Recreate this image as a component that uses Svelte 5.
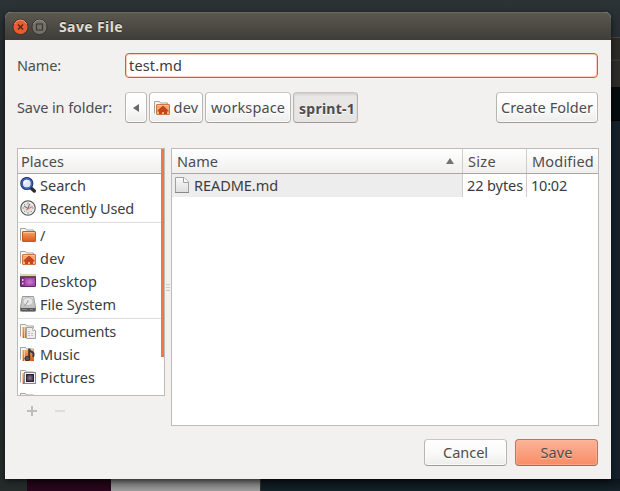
<script>
  function fit(node, width) {
    const extra = width - node.getBoundingClientRect().width;
    node.style.letterSpacing = `${extra / node.textContent.length}px`;
  }

  const groups = [
    [
      { icon: 'search', label: 'Search', w: 46 },
      { icon: 'recent', label: 'Recently Used', w: 94 },
    ],
    [
      { icon: 'folder', label: '/', w: 7 },
      { icon: 'home', label: 'dev', w: 25 },
      { icon: 'desktop', label: 'Desktop', w: 57 },
      { icon: 'disk', label: 'File System', w: 76 },
    ],
    [
      { icon: 'documents', label: 'Documents', w: 76 },
      { icon: 'music', label: 'Music', w: 40 },
      { icon: 'pictures', label: 'Pictures', w: 55 },
      { icon: 'folder', label: 'Videos', w: 46 },
    ],
  ];
</script>

{#snippet txt(label, w)}<span class="txt" use:fit={w}>{label}</span>{/snippet}

{#snippet icon(name)}
  <svg class="icon" width="16" height="16" viewBox="0 0 16 16">
    {#if name === 'search'}
      <path d="M11 11l3.300 3" stroke="#2a2c33" stroke-width="3.400" stroke-linecap="round" />
      <circle cx="6.800" cy="6.500" r="5.300" fill="#dce8f5" stroke="#223a80" stroke-width="2.600" />
      <circle cx="6.800" cy="6.500" r="5" fill="none" stroke="#4f71c0" stroke-width="1" />
      <path d="M4.500 6.500Q5 4 7.500 4" fill="none" stroke="#fff" stroke-width="1.300" />
    {:else if name === 'recent'}
      <circle cx="8" cy="8" r="7.200" fill="#dededc" stroke="#5a5a5a" stroke-width="1.200" />
      <circle cx="8" cy="8" r="5.900" fill="none" stroke="#f6f6f6" />
      <path d="M8 2v2M8 12v2M2 8h2M12 8h2M4 4l1 1M11 11l1 1M4 12l1-1" stroke="#999" />
      <path d="M4 6l4 2.500M8 8.500l1.500-4.500" fill="none" stroke="#666" />
      <path d="M6 10l6.500-3.500" stroke="#e0675c" />
    {:else if name === 'desktop'}
      <rect x=".5" y="1.500" width="15" height="12" rx=".5" fill="#7a2c80" stroke="#5a2b60" />
      <rect x="4.500" y="5" width="10.500" height="8" fill="url(#violet)" />
      <rect x="0" y="1" width="16" height="2" fill="#d9d4bc" />
      <path d="M0 3.500h16" stroke="#5b564a" />
      <path d="M2 6h1.500v2h-1.500zM2 9.500h1.500v2h-1.500z" fill="#e4c8e6" />
    {:else if name === 'disk'}
      <path d="M2.500 .5h11l2 10.500v3.500q0 1-1 1h-13q-1 0-1-1v-3.500z" fill="url(#metal)" stroke="#999" />
      <ellipse cx="8" cy="5.500" rx="5" ry="4" fill="#e7e7e7" stroke="#bbb" />
      <path d="M8 5.500l-3.500 4.500" stroke="#999" />
      <circle cx="8" cy="5.300" r="1.100" fill="#b4b4b4" />
      <path d="M.5 12h15v3h-15z" fill="#5a5a5a" />
      <path d="M2 13.500h5M10 13.500h3" stroke="#888" />
    {:else if name === 'file'}
      <path d="M1.500 .5h8.500l4.500 4.500v10.500h-13z" fill="url(#paper)" stroke="#a1a19e" />
      <path d="M9.500 .5v5h5" fill="#fff" stroke="#a1a19e" />
      <path d="M1 15.500h14" stroke="#888" />
    {:else}
      <path d="M.5 13.500v-12h5l1 1.500h7v3" fill="#f7f7f5" stroke="#a5a39f" />
      {#if name === 'folder' || name === 'home'}
        <rect x="2.500" y="4.500" width="13" height="10" rx=".5" fill={name === 'folder' ? 'url(#orange)' : 'url(#peach)'} stroke={name === 'folder' ? '#c45a26' : '#cf7445'} />
        <path d="M3.500 5.500h11" stroke="#fbc795" />
      {:else}
        <path d="M2 4h12v11h-12z" fill="url(#orange)" />
        <path d="M2.500 4v11M4.500 4v11" stroke="#f8c29b" />
      {/if}
      {#if name === 'home'}
        <path d="M9 5.500l5.500 5v1h-1.500v2.500h-3v-2h-2v2h-3v-2.500h-1.500v-1z" fill="#c8431c" />
      {:else if name === 'documents'}
        <path d="M6.500 4.500h6l3 3v8h-9z" fill="#eee" stroke="#a5a3a0" />
        <path d="M12.500 4.500v3h3" fill="#fff" stroke="#b4b4b4" />
        <path d="M8 8.500h3M8 10.500h6M8 12.500h5" stroke="#c0c0c0" stroke-dasharray="2 1" />
      {:else if name === 'music'}
        <path d="M9.200 12V2.500q.3 2.800 2.800 3.500 2.500 1.200 1 5" fill="none" stroke="#3a3a38" stroke-width="2" />
        <ellipse cx="7.400" cy="12.500" rx="2.500" ry="2.100" fill="#555551" stroke="#2c2c2a" />
      {:else if name === 'pictures'}
        <rect x="4.500" y="3.500" width="11" height="11" fill="#f3f3f3" stroke="#8a8a8a" />
        <rect x="6.500" y="5.500" width="7" height="7" fill="url(#photo)" stroke="#28222d" />
      {/if}
    {/if}
  </svg>
{/snippet}

<svg class="defs" width="0" height="0">
  <defs>
    <linearGradient id="orange" x1="0" y1="0" x2="0" y2="1"><stop stop-color="#f5a85f" /><stop offset="1" stop-color="#dc5521" /></linearGradient>
    <linearGradient id="peach" x1="0" y1="0" x2="0" y2="1"><stop stop-color="#f3a068" /><stop offset="1" stop-color="#f7b98a" /></linearGradient>
    <linearGradient id="metal" x1="0" y1="0" x2="0" y2="1"><stop stop-color="#ddd" /><stop offset="1" stop-color="#b4b4b4" /></linearGradient>
    <linearGradient id="paper" x1="0" y1="0" x2="0" y2="1"><stop stop-color="#fafafa" /><stop offset="1" stop-color="#ddd" /></linearGradient>
    <radialGradient id="violet"><stop stop-color="#d47bd5" /><stop offset="1" stop-color="#a548ab" /></radialGradient>
    <radialGradient id="photo"><stop stop-color="#8f7a9e" /><stop offset="1" stop-color="#433348" /></radialGradient>
  </defs>
</svg>

<div class="desk">
  <div class="behind right"></div>
  <div class="behind bottom"><i class="plum"></i><i class="grey"></i><i class="navy"></i></div>
  <section class="dialog">
    <header class="title">
      <svg width="40" height="18" viewBox="0 0 40 18">
        <circle cx="9.500" cy="9" r="7.600" fill="#e95b31" stroke="#35332f" />
        <path d="M3.500 6a6.500 6.500 0 0 1 12 0" fill="none" stroke="#f8936e" />
        <path d="M7 6.500l5 5M12 6.500l-5 5" stroke="#4b2b20" stroke-width="1.400" />
        <circle cx="28.500" cy="9" r="7.600" fill="#747169" stroke="#35332f" />
        <path d="M22.500 6a6.500 6.500 0 0 1 12 0" fill="none" stroke="#918e85" />
        <rect x="25.500" y="6" width="6" height="6" fill="none" stroke="#3c3b37" stroke-width="1.200" />
      </svg>
      <b>{@render txt('Save File', 64)}</b>
    </header>
    <div class="body">
      <div class="row name">
        <div class="label">{@render txt('Name:', 44)}</div>
        <div class="input">{@render txt('test.md', 53)}</div>
      </div>
      <div class="row path">
        <div class="label">{@render txt('Save in folder:', 95)}</div>
        <div class="crumbs">
          <div class="btn back"><svg width="6" height="8" viewBox="0 0 6 8"><path d="M6 0v8l-6-4z" fill="#686865" /></svg></div>
          <div class="btn dev">{@render icon('home')}{@render txt('dev', 25)}</div>
          <div class="btn work">{@render txt('workspace', 74)}</div>
          <div class="btn active">{@render txt('sprint-1', 56)}</div>
        </div>
        <div class="btn create">{@render txt('Create Folder', 92)}</div>
      </div>
      <div class="panes">
        <div class="side">
          <div class="places">
            <div class="head">{@render txt('Places', 43)}</div>
            {#each groups as group, g}
              {#if g}<div class="sep"></div>{/if}
              {#each group as item}
                <div class="place">{@render icon(item.icon)}{@render txt(item.label, item.w)}</div>
              {/each}
            {/each}
            <div class="thumb"></div>
          </div>
          <svg class="tools" width="60" height="12" viewBox="0 0 60 12">
            <path d="M10 6h10M15 1v10" stroke="#bdbdba" stroke-width="2" />
            <path d="M38 6h10" stroke="#dddcda" stroke-width="2" />
          </svg>
        </div>
        <div class="grip"><i></i><i></i><i></i></div>
        <div class="files">
          <div class="cols head">
            <div class="c1">{@render txt('Name', 41)}<svg width="8" height="6" viewBox="0 0 8 6"><path d="M4 0l4 6h-8z" fill="#737370" /></svg></div>
            <div class="c2">{@render txt('Size', 28)}</div>
            <div class="c3">{@render txt('Modified', 62)}</div>
          </div>
          <div class="cols file">
            <div class="c1">{@render icon('file')}{@render txt('README.md', 84)}</div>
            <div class="c2">{@render txt('22 bytes', 56)}</div>
            <div class="c3">{@render txt('10:02', 36)}</div>
          </div>
        </div>
      </div>
      <div class="actions">
        <div class="btn">{@render txt('Cancel', 45)}</div>
        <div class="btn save">{@render txt('Save', 32)}</div>
      </div>
    </div>
  </section>
</div>

<style>
  :global(body) { margin: 0; overflow: hidden; }
  * { box-sizing: border-box; }
  .defs { position: absolute; }
  .desk {
    position: relative; width: 620px; height: 491px; padding: 12px 9px 12px 5px; overflow: hidden;
    background: linear-gradient(#2c3336, #262c2f 40px, #23292b 400px, #252b2b);
    font: 14.5px/20px "Noto Sans", "Open Sans", sans-serif; color: #4c4c4c;
  }
  .behind { position: absolute; }
  .right {
    left: 611px; top: 37px; width: 9px; bottom: 0;
    background: linear-gradient(#45433b 0 1px, #2b2a26 1px 22px, #3b3933 23px 24px, #2e2c29 24px 50px, #060b0e 50px 83px, #020304 83px 84px, #142129 84px);
  }
  .bottom { left: 27px; top: 479px; right: 0; height: 12px; display: flex; }
  .plum { width: 84px; background: linear-gradient(#1c0412, #2b061e); }
  .grey { width: 149px; background: linear-gradient(#6b6b6b, #9b9b9b); }
  .navy { flex: 1; background: linear-gradient(#0b1418, #14222a); border-left: 1px solid #292929; }
  .dialog { position: relative; width: 606px; height: 467px; background: #f2f1f0; border-radius: 6px 6px 0 0; overflow: hidden; box-shadow: 0 2px 6px #0009; }
  .title { height: 28px; display: flex; align-items: center; padding-left: 6px; background: linear-gradient(#5b584e, #3e3d38); border-top: 1px solid #6b685e; color: #dfdbd2; text-shadow: 0 -1px #24231f; }
  .title b { margin-left: 8px; padding-top: 1px; font-size: 14px; }
  .txt { display: inline-block; white-space: nowrap; }
  .icon { flex: none; display: block; }
  .body { padding: 13px 13px 0 12px; }
  .row { display: flex; align-items: center; }
  .label { width: 108px; padding-bottom: 2px; }
  .name { height: 25px; }
  .input { flex: 1; height: 25px; padding: 1px 3px; background: #fff; border: 1px solid #d35c34; border-radius: 4px; box-shadow: inset 0 0 0 1px #f9cfbd; color: #3c3c3c; }
  .path { height: 31px; margin-top: 14px; }
  .crumbs { display: flex; gap: 2px; flex: 1; }
  .btn { height: 31px; display: flex; align-items: center; justify-content: center; border: 1px solid #b8b5b1; border-top-color: #cac7c3; border-bottom-color: #9f9c98; border-radius: 4px; background: linear-gradient(#fff, #fafafa 50%, #eeedec); box-shadow: inset 0 0 0 1px #ffffffb0; text-shadow: 0 1px #fff; }
  .btn .txt { padding-bottom: 2px; }
  .back { width: 22px; }
  .dev { width: 54px; gap: 4px; }
  .work { width: 86px; }
  .active { width: 65px; font-weight: bold; font-size: 14px; padding: 4px 0 0 3px; background: linear-gradient(#dddcdb, #e8e7e6 4px, #e6e5e4); box-shadow: inset 0 1px 2px #d0cecb; }
  .create { width: 102px; }
  .panes { display: flex; margin-top: 25px; height: 278px; }
  .side { width: 148px; flex: none; }
  .places { position: relative; height: 248px; overflow: hidden; border: 1px solid #bdbbb7; background: #fff; color: #3c3c3c; }
  .head { height: 25px; border-bottom: 1px solid #aaa8a5; background: linear-gradient(#fff, #f0efee); color: #4c4c4c; line-height: 25px; }
  .places .head { padding-left: 3px; }
  .place { height: 23px; display: flex; align-items: center; gap: 4px; padding: 0 0 1px 2px; }
  .place .txt { padding-bottom: 1px; }
  .sep { height: 4px; padding-top: 2px; }
  .sep::before { content: ''; display: block; height: 1px; background: #dedede; }
  .thumb { position: absolute; right: 0; top: 0; width: 3px; height: 208px; background: #f07746; }
  .tools { display: block; margin-top: 9px; }
  .grip { width: 6px; flex: none; padding: 136px 1px 0; display: flex; flex-direction: column; gap: 2px; }
  .grip i { height: 1px; background: #cac8c5; }
  .files { width: 428px; flex: none; border: 1px solid #bdbbb7; background: #fff; }
  .cols { display: flex; }
  .c1 { width: 291px; border-right: 1px solid #cfcdca; display: flex; align-items: center; }
  .c2 { width: 64px; border-right: 1px solid #cfcdca; }
  .c3 { flex: 1; }
  .head .c1 { padding: 0 8px 0 5px; justify-content: space-between; }
  .head .c2, .head .c3 { padding-left: 5px; }
  .file { height: 23px; line-height: 23px; color: #3c3c3c; }
  .file .c1 { background: #ededed; gap: 4px; padding-left: 2px; }
  .file .c1 .icon { margin-bottom: 1px; }
  .file .c2 { padding-left: 4px; }
  .file .c3 { padding-left: 4px; }
  .actions { display: flex; justify-content: flex-end; gap: 8px; margin-top: 13px; }
  .actions .btn { width: 83px; height: 27px; }
  .actions .save { border-color: #b17965; border-bottom-color: #96705f; background: linear-gradient(#fcb398, #f88d65); box-shadow: inset 0 0 0 1px #ffb89c90; text-shadow: 0 1px #ffc5ad; }
</style>
